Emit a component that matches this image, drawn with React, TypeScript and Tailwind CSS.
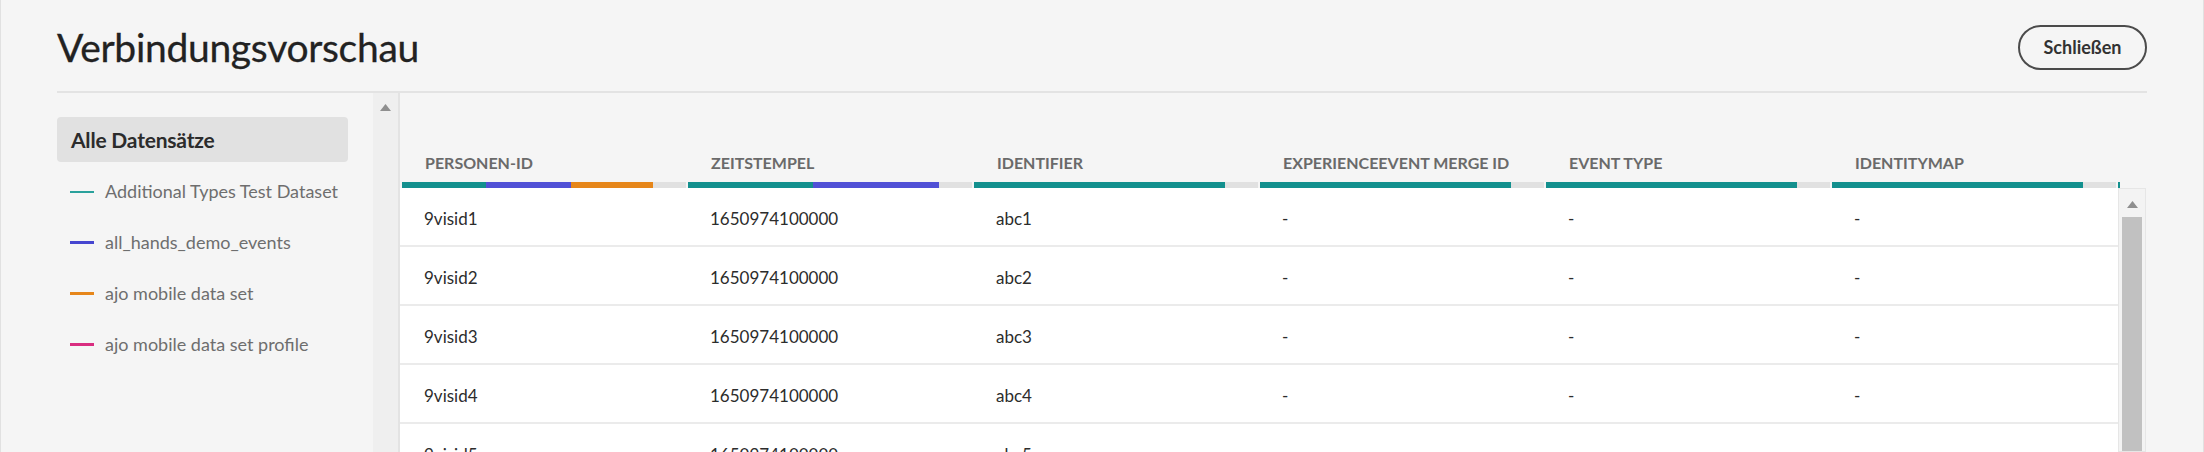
import React from "react";

type Seg = { color: string; w: number };

const columns: { label: string; segs: Seg[] }[] = [
  {
    label: "PERSONEN-ID",
    segs: [
      { color: "bg-[#13908e]", w: 84 },
      { color: "bg-[#5151d6]", w: 85 },
      { color: "bg-[#e6861a]", w: 82 },
    ],
  },
  {
    label: "ZEITSTEMPEL",
    segs: [
      { color: "bg-[#13908e]", w: 125 },
      { color: "bg-[#5151d6]", w: 126 },
    ],
  },
  { label: "IDENTIFIER", segs: [{ color: "bg-[#13908e]", w: 251 }] },
  { label: "EXPERIENCEEVENT MERGE ID", segs: [{ color: "bg-[#13908e]", w: 251 }] },
  { label: "EVENT TYPE", segs: [{ color: "bg-[#13908e]", w: 251 }] },
  { label: "IDENTITYMAP", segs: [{ color: "bg-[#13908e]", w: 251 }] },
  { label: "", segs: [{ color: "bg-[#13908e]", w: 251 }] },
];

const datasets = [
  { name: "Additional Types Test Dataset", line: "bg-[#2aa19c] h-[2px]" },
  { name: "all_hands_demo_events", line: "bg-[#4646d0] h-[3px]" },
  { name: "ajo mobile data set", line: "bg-[#e6861a] h-[3px]" },
  { name: "ajo mobile data set profile", line: "bg-[#d92d80] h-[3px]" },
];

const rows = [1, 2, 3, 4, 5].map((n) => [
  `9visid${n}`,
  "1650974100000",
  `abc${n}`,
  "-",
  "-",
  "-",
]);

const UpArrow = ({ className }: { className?: string }) => (
  <svg width="11" height="7" viewBox="0 0 11 7" className={className}>
    <path d="M5.5 0 L11 7 L0 7 Z" fill="#8f8f8f" />
  </svg>
);

const App = () => {
  return (
    <div className="w-[2204px] h-[452px] overflow-hidden bg-[#f5f5f5] border-x border-[#e1e1e1] font-['Lato',sans-serif] flex flex-col">
      <header className="mx-[56px] h-[93px] shrink-0 border-b-2 border-[#e3e3e3] flex items-center justify-between pt-[4px]">
        <h1 className="text-[39px] leading-none text-[#222222] tracking-[-0.3px] [-webkit-text-stroke:0.3px_#222222]">
          Verbindungsvorschau
        </h1>
        <button className="h-[45px] w-[129px] rounded-full border-2 border-[#4b4b4b] text-[18px] font-bold text-[#323232]">
          Schließen
        </button>
      </header>

      <div className="flex flex-1 min-h-0 ml-[56px] mr-[56px]">
        <aside className="w-[343px] shrink-0 flex">
          <div className="w-[316px] pt-[24px]">
            <div className="w-[291px] h-[45px] rounded-[4px] bg-[#e1e1e1] px-[14px] flex items-center text-[21px] font-bold text-[#2c2c2c] tracking-[-0.2px]">
              Alle Datensätze
            </div>
            <ul className="mt-[4px]">
              {datasets.map((d) => (
                <li key={d.name} className="h-[51px] flex items-center pl-[13px]">
                  <span className={`w-[24px] ${d.line}`} />
                  <span className="ml-[11px] text-[18px] text-[#6e6e6e]">
                    {d.name}
                  </span>
                </li>
              ))}
            </ul>
          </div>
          <div className="w-[27px] bg-[#efefef] border-r-2 border-[#e3e3e3] flex justify-center pt-[11px]">
            <UpArrow />
          </div>
        </aside>

        <main className="flex-1 min-w-0 flex flex-col">
          <div className="h-[95px] shrink-0 w-[1720px] overflow-hidden pl-[2px] pt-[60px] flex">
            {columns.map((c, i) => (
              <div key={i} className="w-[286px] shrink-0 flex flex-col">
                <div className="h-[20px] leading-[20px] pl-[23px] text-[16px] font-bold text-[#6a6a6a] whitespace-nowrap">
                  {c.label}
                </div>
                <div className="mt-[9px] h-[6px] flex">
                  {c.segs.map((s, j) => (
                    <span
                      key={j}
                      className={`${s.color} h-full`}
                      style={{ width: s.w }}
                    />
                  ))}
                  <span className="w-[33px] h-full bg-[#e1e1e1]" />
                </div>
              </div>
            ))}
          </div>

          <div className="flex flex-1 min-h-0">
            <div className="w-[1718px] bg-white overflow-hidden">
              {rows.map((r, i) => (
                <div
                  key={i}
                  className="h-[59px] border-b-2 border-[#ebebeb] flex items-center pl-[2px] pt-[4px]"
                >
                  {r.map((cell, j) => (
                    <div
                      key={j}
                      className="w-[286px] shrink-0 pl-[22px] text-[17px] text-[#2c2c2c]"
                    >
                      {cell}
                    </div>
                  ))}
                </div>
              ))}
            </div>
            <div className="w-[28px] shrink-0 border border-[#e6e6e6] bg-[#f3f3f3] flex flex-col items-center">
              <UpArrow className="mt-[12px]" />
              <div className="mt-[9px] w-[20px] flex-1 bg-[#c1c1c1]" />
            </div>
          </div>
        </main>
      </div>
    </div>
  );
};

export default App;
